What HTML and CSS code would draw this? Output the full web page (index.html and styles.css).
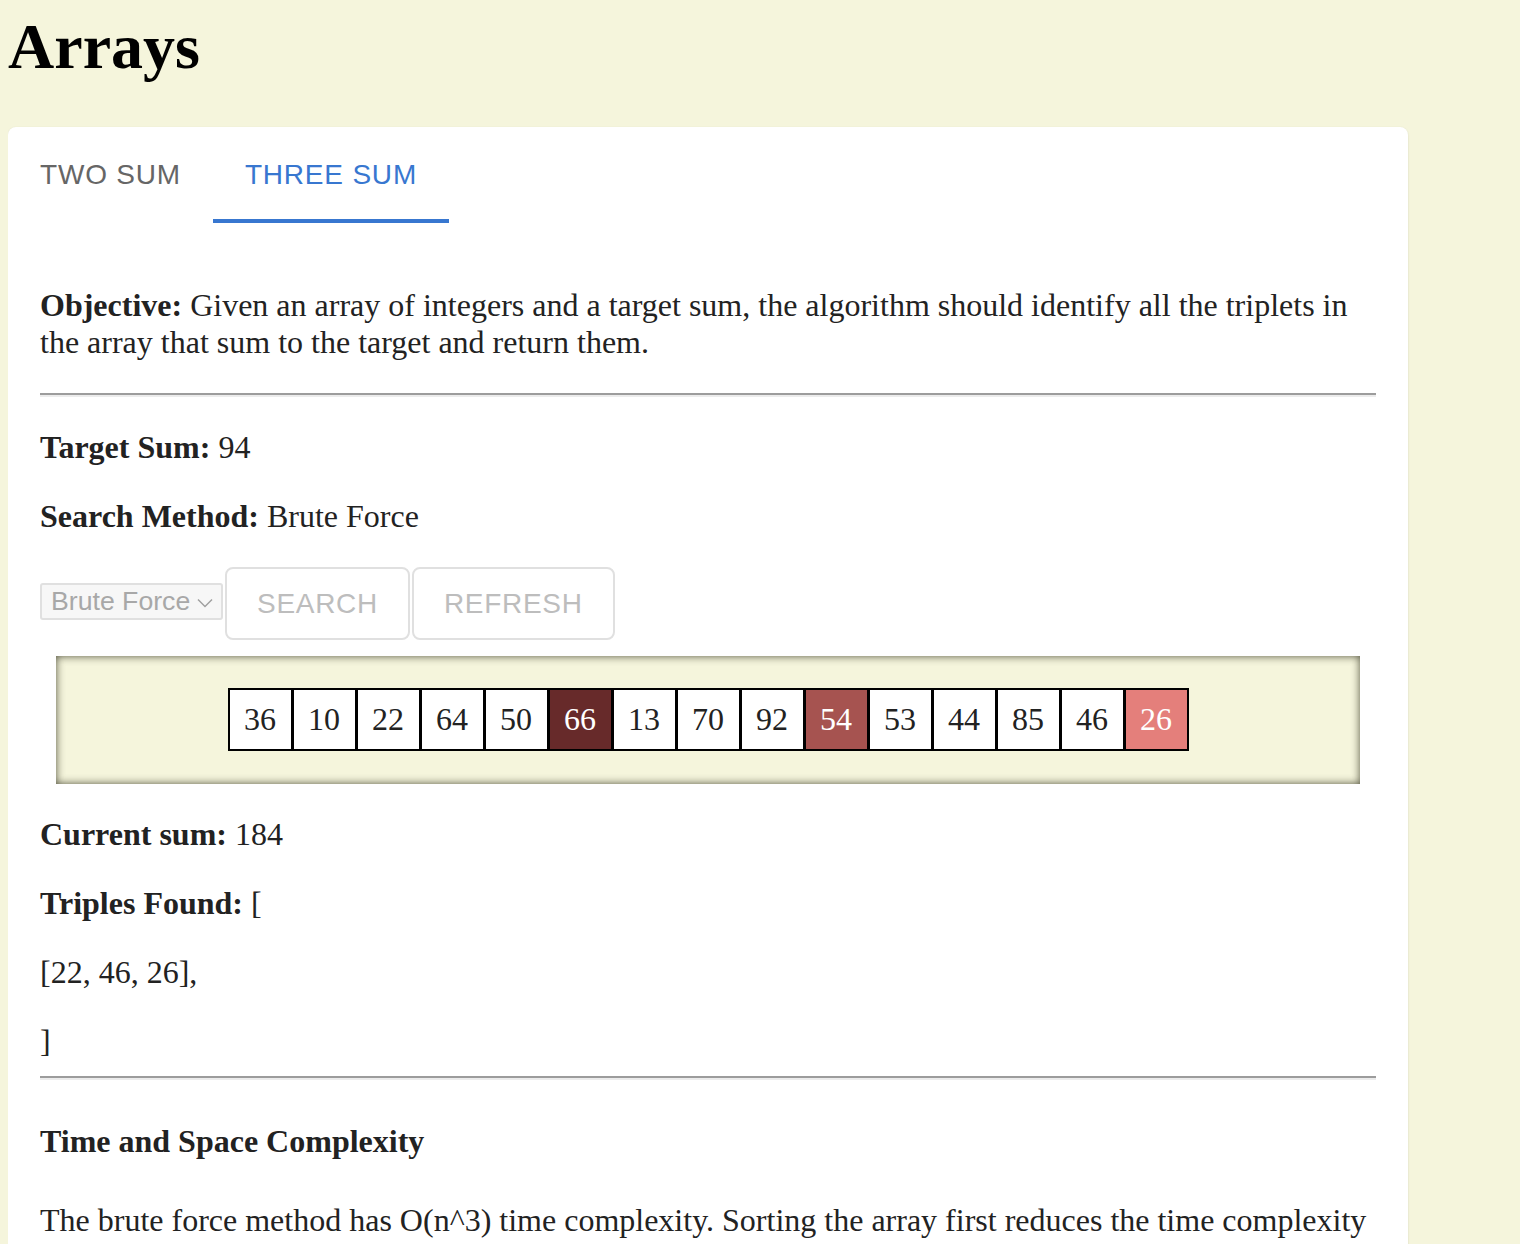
FILE: index.html
```html
<!DOCTYPE html>
<html lang="en">
<head>
<meta charset="utf-8">
<title>Arrays</title>
<link rel="stylesheet" href="styles.css">
</head>
<body>
<h1 class="page-title">Arrays</h1>
<div class="card">
  <div class="tabs">
    <div class="tab">TWO SUM</div>
    <div class="tab tab-active">THREE SUM</div>
  </div>
  <div class="panel">
    <p><b>Objective:</b> Given an array of integers and a target sum, the algorithm should identify all the triplets in the array that sum to the target and return them.</p>
    <hr class="rule">
    <p><b>Target Sum:</b> 94</p>
    <p><b>Search Method:</b> Brute Force</p>
    <div class="controls">
      <div class="select">
        <span class="select-text">Brute Force</span>
        <svg class="chev" width="16" height="10" viewBox="0 0 16 10"><path d="M1 1.5 L8 8.5 L15 1.5" fill="none" stroke="#a0a0a0" stroke-width="1.5"/></svg>
      </div>
      <button class="btn" disabled>SEARCH</button>
      <button class="btn" disabled>REFRESH</button>
    </div>
    <div class="array-box">
      <div class="array-row">
        <div class="cell">36</div>
        <div class="cell">10</div>
        <div class="cell">22</div>
        <div class="cell">64</div>
        <div class="cell">50</div>
        <div class="cell cell-i">66</div>
        <div class="cell">13</div>
        <div class="cell">70</div>
        <div class="cell">92</div>
        <div class="cell cell-j">54</div>
        <div class="cell">53</div>
        <div class="cell">44</div>
        <div class="cell">85</div>
        <div class="cell">46</div>
        <div class="cell cell-k">26</div>
      </div>
    </div>
    <div class="results">
      <p><b>Current sum:</b> 184</p>
      <p><b>Triples Found:</b> [</p>
      <p>[22, 46, 26],</p>
      ]
    </div>
    <hr class="rule">
    <h4 class="section-title">Time and Space Complexity</h4>
    <p>The brute force method has O(n^3) time complexity. Sorting the array first reduces the time complexity to O(n^2) by using the two-pointer technique. Both methods use O(1) extra space, excluding the space needed to store the output.</p>
  </div>
</div>
</body>
</html>
```
FILE: styles.css
```css
html, body {
  background: #f5f5dc;
}
body {
  margin: 8px;
  font-family: "Liberation Serif", "Times New Roman", serif;
  font-size: 32px;
  color: #222;
}
.page-title {
  margin: 2px 0 43px;
  font-size: 64px;
  font-weight: bold;
  color: #000;
  line-height: normal;
}
.card {
  width: 1400px;
  background: #fff;
  border-radius: 8px;
  box-shadow: 0 2px 3px rgba(0, 0, 0, 0.08), 0 0 2px rgba(0, 0, 0, 0.06);
}
.tabs {
  display: flex;
}
.tab {
  height: 96px;
  padding: 0 32px;
  display: flex;
  align-items: center;
  font-family: "Liberation Sans", Arial, sans-serif;
  font-size: 28px;
  letter-spacing: 0.8px;
  color: #666;
}
.tab-active {
  color: #3877d0;
  box-shadow: inset 0 -4px 0 #3877d0;
}
.panel {
  padding: 32px;
}
.panel p {
  margin: 32px 0;
}
.rule {
  margin: 16px 0;
  border: 0;
  border-top: 2px solid #9c9c9c;
  border-bottom: 2px solid #ececec;
  height: 0;
}
.controls {
  display: flex;
  align-items: center;
  gap: 2px;
}
.select {
  box-sizing: border-box;
  width: 183px;
  height: 37px;
  margin-bottom: 4px;
  border: 2px solid #e0e0e0;
  border-radius: 3px;
  background: #f7f7f7;
  display: flex;
  align-items: center;
  justify-content: space-between;
  padding: 0 8px 0 9px;
  font-family: "Liberation Sans", Arial, sans-serif;
  font-size: 26.67px;
  color: #a8a8a8;
}
.chev {
  margin-top: 2px;
}
.btn {
  font-family: "Liberation Sans", Arial, sans-serif;
  font-size: 28px;
  letter-spacing: 0.7px;
  line-height: 49px;
  padding: 10px 30px;
  border: 2px solid #e0e0e0;
  border-radius: 8px;
  background: #fff;
  color: #bdbdbd;
  margin: 0;
}
.array-box {
  margin: 16px;
  padding: 32px 0 33px;
  background: #f5f5dc;
  box-shadow: inset 0 0 9px rgba(50, 50, 30, 0.85);
  display: flex;
  justify-content: center;
}
.array-row {
  display: flex;
}
.cell {
  box-sizing: border-box;
  width: 65px;
  height: 63px;
  border: 2px solid #000;
  margin-left: -1px;
  background: #fff;
  text-align: center;
  line-height: 59px;
  color: #222;
}
.cell:first-child {
  margin-left: 0;
}
.cell-i {
  background: #672a2a;
  color: #fff;
}
.cell-j {
  background: #a65350;
  color: #fff;
}
.cell-k {
  background: #e47f7b;
  color: #fff;
}
.section-title {
  font-size: 32px;
  margin: 42.5px 0;
}
.panel .section-title + p {
  margin-top: 42.5px;
}
```
